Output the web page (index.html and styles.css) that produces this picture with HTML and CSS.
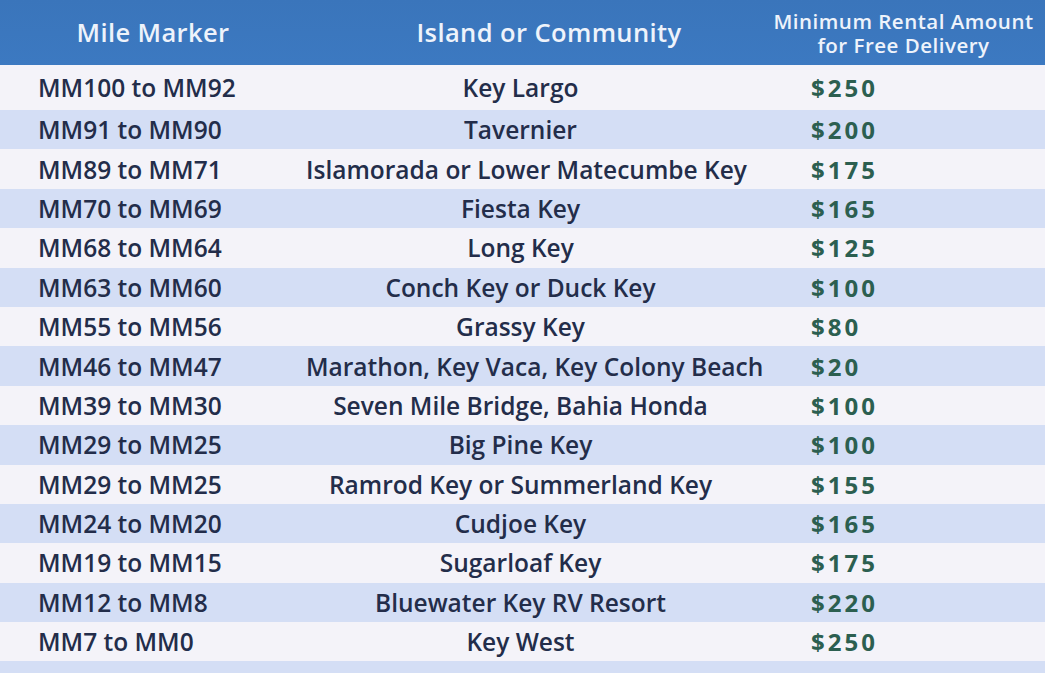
FILE: index.html
```html
<!DOCTYPE html>
<html>
<head>
<meta charset="utf-8">
<link rel="stylesheet" href="styles.css">
</head>
<body>
<div class="table">
  <div class="head">
    <div class="h h1">Mile Marker</div>
    <div class="h h2">Island or Community</div>
    <div class="h h3"><span>Minimum Rental Amount<br>for Free Delivery</span></div>
  </div>
  <div class="row"><div class="mm">MM100 to MM92</div><div class="isl">Key Largo</div><div class="amt">$250</div></div>
  <div class="row"><div class="mm">MM91 to MM90</div><div class="isl">Tavernier</div><div class="amt">$200</div></div>
  <div class="row"><div class="mm">MM89 to MM71</div><div class="isl">Islamorada or Lower Matecumbe Key</div><div class="amt">$175</div></div>
  <div class="row"><div class="mm">MM70 to MM69</div><div class="isl">Fiesta Key</div><div class="amt">$165</div></div>
  <div class="row"><div class="mm">MM68 to MM64</div><div class="isl">Long Key</div><div class="amt">$125</div></div>
  <div class="row"><div class="mm">MM63 to MM60</div><div class="isl">Conch Key or Duck Key</div><div class="amt">$100</div></div>
  <div class="row"><div class="mm">MM55 to MM56</div><div class="isl">Grassy Key</div><div class="amt">$80</div></div>
  <div class="row"><div class="mm">MM46 to MM47</div><div class="isl">Marathon, Key Vaca, Key Colony Beach</div><div class="amt">$20</div></div>
  <div class="row"><div class="mm">MM39 to MM30</div><div class="isl">Seven Mile Bridge, Bahia Honda</div><div class="amt">$100</div></div>
  <div class="row"><div class="mm">MM29 to MM25</div><div class="isl">Big Pine Key</div><div class="amt">$100</div></div>
  <div class="row"><div class="mm">MM29 to MM25</div><div class="isl">Ramrod Key or Summerland Key</div><div class="amt">$155</div></div>
  <div class="row"><div class="mm">MM24 to MM20</div><div class="isl">Cudjoe Key</div><div class="amt">$165</div></div>
  <div class="row"><div class="mm">MM19 to MM15</div><div class="isl">Sugarloaf Key</div><div class="amt">$175</div></div>
  <div class="row"><div class="mm">MM12 to MM8</div><div class="isl">Bluewater Key RV Resort</div><div class="amt">$220</div></div>
  <div class="row"><div class="mm">MM7 to MM0</div><div class="isl">Key West</div><div class="amt">$250</div></div>
  <div class="row last"></div>
</div>
</body>
</html>
```
FILE: styles.css
```css
html, body {
  margin: 0;
  padding: 0;
  background: #f4f3f9;
  overflow: hidden;
}
.table {
  width: 1045px;
  height: 673px;
  overflow: hidden;
  font-family: "Open Sans", "DejaVu Sans", sans-serif;
  font-weight: 600;
}
.head {
  display: grid;
  grid-template-columns: 306px 464px minmax(0, 1fr);
  height: 65px;
  background: linear-gradient(#3a75bb, #3c79c1);
  color: #eef3fb;
  align-items: center;
}
.h {
  display: flex;
  justify-content: center;
  white-space: nowrap;
  text-align: center;
  min-width: 0;
}
.h1, .h2 {
  font-size: 25.5px;
  letter-spacing: 0.4px;
  padding-bottom: 1px;
}
.h2 { padding-left: 22px; }
.h3 {
  font-size: 20.5px;
  line-height: 24px;
  letter-spacing: 0.5px;
  padding-right: 8px;
  padding-top: 1px;
}
.row {
  display: grid;
  grid-template-columns: 306px 484px minmax(0, 1fr);
  height: 39.4px;
  align-items: center;
  color: #232d4a;
  font-size: 24.5px;
  white-space: nowrap;
}
.row:nth-child(2) { height: 45px; }
.row:nth-child(odd) { background: #d4def5; }
.row:nth-child(even) { background: #f4f3f9; }
.mm { padding-left: 38px; }
.isl { text-align: center; padding-right: 55px; }
.amt {
  padding-left: 21px;
  color: #2c5f50;
  font-size: 24px;
  font-weight: 700;
  letter-spacing: 3px;
}
```
